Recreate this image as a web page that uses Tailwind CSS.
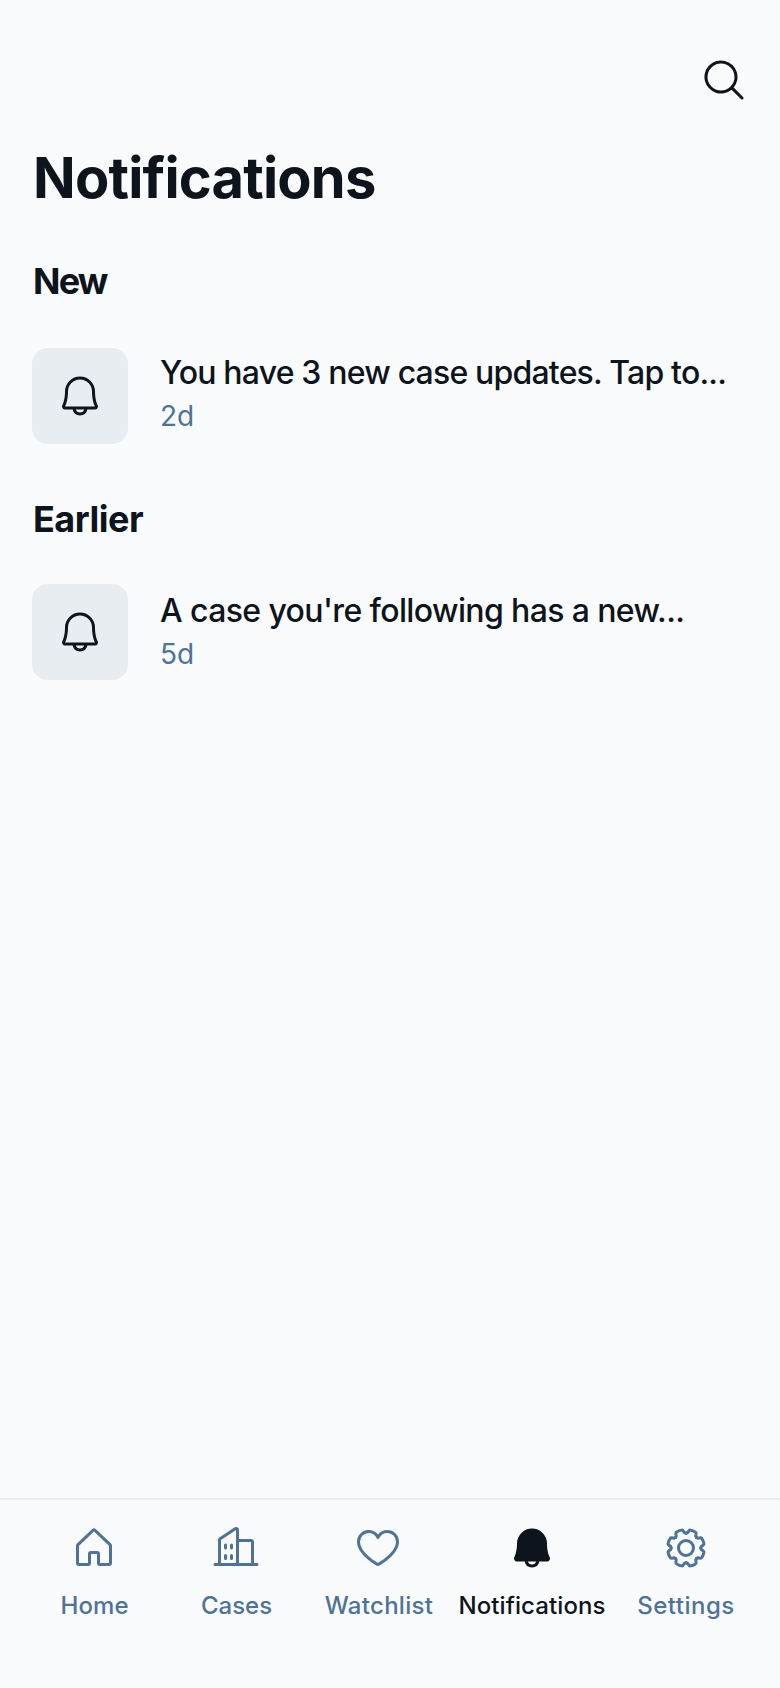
<!DOCTYPE html>
<html lang="en">
<head>
<meta charset="utf-8">
<title>Notifications</title>
<script src="https://cdn.jsdelivr.net/npm/@tailwindcss/browser@4"></script>
</head>
<body class="bg-[#f9fbfd] text-[#0e141b] font-['Inter',sans-serif]">
<svg class="hidden">
  <symbol id="bell" viewBox="0 0 256 256"><path d="M221.8,175.94C216.25,166.38,208,139.33,208,104a80,80,0,1,0-160,0c0,35.34-8.26,62.38-13.81,71.94A16,16,0,0,0,48,200H88.81a40,40,0,0,0,78.38,0H208a16,16,0,0,0,13.8-24.06ZM128,216a24,24,0,0,1-22.62-16h45.24A24,24,0,0,1,128,216ZM48,184c7.7-13.24,16-43.92,16-80a64,64,0,1,1,128,0c0,36.05,8.28,66.73,16,80Z"/></symbol>
  <symbol id="tooth" viewBox="-128 -128 256 256" overflow="visible"><path d="M-30.2,-73L-24,-78L-20.5,-92Q-19,-96.5 -14,-97.5Q0,-100.5 14,-97.5Q19,-96.5 20.5,-92L24,-78L30.2,-73"/></symbol>
</svg>
<div class="flex h-[1688px] w-[780px] flex-col">
  <header class="px-8 pt-14">
    <div class="flex justify-end">
      <svg class="size-12 fill-current" viewBox="0 0 256 256"><path d="M229.66,218.34l-50.07-50.06a88.11,88.11,0,1,0-11.31,11.31l50.06,50.07a8,8,0,0,0,11.32-11.32ZM40,112a72,72,0,1,1,72,72A72.08,72.08,0,0,1,40,112Z"/></svg>
    </div>
    <h1 class="mt-[39px] pl-px text-[56px] leading-[70px] font-bold tracking-[-0.8px]">Notifications</h1>
  </header>
  <main class="flex-1 px-8">
    <h2 class="mt-[46px] pl-px text-[36px] leading-[45px] font-bold tracking-[-1.8px]">New</h2>
    <div class="mt-[44px] flex h-24 gap-8">
      <div class="flex size-24 shrink-0 items-center justify-center rounded-2xl bg-[#e8edf2]"><svg class="size-12 fill-current"><use href="#bell"/></svg></div>
      <div class="pt-px whitespace-nowrap">
        <p class="text-[32px] leading-[48px] font-medium tracking-[-0.81px]">You have 3 new case updates. Tap to...</p>
        <p class="text-[28px] leading-[38px] text-[#4e7397]">2d</p>
      </div>
    </div>
    <h2 class="mt-[53px] pl-px text-[36px] leading-[45px] font-bold tracking-[-0.5px]">Earlier</h2>
    <div class="mt-[42px] flex h-24 gap-8">
      <div class="flex size-24 shrink-0 items-center justify-center rounded-2xl bg-[#e8edf2]"><svg class="size-12 fill-current"><use href="#bell"/></svg></div>
      <div class="pt-[3px] whitespace-nowrap">
        <p class="text-[32px] leading-[48px] font-medium tracking-[-0.62px]">A case you're following has a new...</p>
        <p class="text-[28px] leading-[38px] text-[#4e7397]">5d</p>
      </div>
    </div>
  </main>
  <nav class="grid h-[190px] grid-cols-[142px_142px_142px_166px_142px] border-t-2 border-[#e8edf2] pt-6 pl-[23px] text-[24px] leading-9 font-medium text-[#4e7397]">
    <div class="flex flex-col items-center gap-4 whitespace-nowrap">
      <svg class="size-12 shrink-0 fill-current" viewBox="0 0 256 256"><path d="M218.83,103.77l-80-75.48a1.14,1.14,0,0,1-.11-.11,16,16,0,0,0-21.53,0l-.11.11L37.17,103.77A16,16,0,0,0,32,115.55V208a16,16,0,0,0,16,16H96a16,16,0,0,0,16-16V160h32v48a16,16,0,0,0,16,16h48a16,16,0,0,0,16-16V115.55A16,16,0,0,0,218.83,103.77ZM208,208H160V160a16,16,0,0,0-16-16H112a16,16,0,0,0-16,16v48H48V115.55l.11-.1L128,40l79.9,75.43.11.1Z"/></svg>
      <span class="pl-px tracking-[0.1px]">Home</span>
    </div>
    <div class="flex flex-col items-center gap-4 whitespace-nowrap">
      <svg class="size-12 shrink-0 fill-current" viewBox="0 0 256 256"><path d="M240,208H224V96a16,16,0,0,0-16-16H144V32a16,16,0,0,0-24.88-13.32L39.12,72A16,16,0,0,0,32,85.34V208H16a8,8,0,0,0,0,16H240a8,8,0,0,0,0-16ZM208,96V208H144V96ZM48,85.34,128,32V208H48ZM112,112v16a8,8,0,0,1-16,0V112a8,8,0,1,1,16,0Zm-32,0v16a8,8,0,0,1-16,0V112a8,8,0,1,1,16,0Zm0,56v16a8,8,0,0,1-16,0V168a8,8,0,0,1,16,0Zm32,0v16a8,8,0,0,1-16,0V168a8,8,0,0,1,16,0Z"/></svg>
      <span class="pl-px">Cases</span>
    </div>
    <div class="flex flex-col items-center gap-4 whitespace-nowrap">
      <svg class="size-12 shrink-0 fill-current" viewBox="0 0 256 256"><path d="M178,32c-20.65,0-38.73,8.88-50,23.89C116.73,40.88,98.65,32,78,32A62.07,62.07,0,0,0,16,94c0,70,103.79,126.66,108.21,129a8,8,0,0,0,7.58,0C136.21,220.66,240,164,240,94A62.07,62.07,0,0,0,178,32ZM128,206.8C109.74,196.16,32,147.69,32,94A46.06,46.06,0,0,1,78,48c19.45,0,35.78,10.36,42.6,27a8,8,0,0,0,14.8,0c6.82-16.67,23.15-27,42.6-27a46.06,46.06,0,0,1,46,46C224,147.61,146.24,196.15,128,206.8Z"/></svg>
      <span class="pl-[2px] tracking-[0.3px]">Watchlist</span>
    </div>
    <div class="flex flex-col items-center gap-4 whitespace-nowrap text-[#0e141b]">
      <svg class="size-12 shrink-0 fill-current" viewBox="0 0 256 256"><path d="M221.8,175.94C216.25,166.38,208,139.33,208,104a80,80,0,1,0-160,0c0,35.34-8.26,62.38-13.81,71.94A16,16,0,0,0,48,200H88.81a40,40,0,0,0,78.38,0H208a16,16,0,0,0,13.8-24.06ZM128,216a24,24,0,0,1-22.62-16h45.24A24,24,0,0,1,128,216Z"/></svg>
      <span class="tracking-[0.1px]">Notifications</span>
    </div>
    <div class="flex flex-col items-center gap-4 whitespace-nowrap">
      <svg class="size-12 shrink-0 fill-none stroke-current" stroke-width="16" stroke-linejoin="round" stroke-linecap="round" viewBox="-128 -128 256 256">
        <circle r="40"/>
        <g transform="rotate(22.5)">
          <use href="#tooth" x="-128" y="-128" width="256" height="256"/>
          <use href="#tooth" x="-128" y="-128" width="256" height="256" transform="rotate(45)"/>
          <use href="#tooth" x="-128" y="-128" width="256" height="256" transform="rotate(90)"/>
          <use href="#tooth" x="-128" y="-128" width="256" height="256" transform="rotate(135)"/>
          <use href="#tooth" x="-128" y="-128" width="256" height="256" transform="rotate(180)"/>
          <use href="#tooth" x="-128" y="-128" width="256" height="256" transform="rotate(225)"/>
          <use href="#tooth" x="-128" y="-128" width="256" height="256" transform="rotate(270)"/>
          <use href="#tooth" x="-128" y="-128" width="256" height="256" transform="rotate(315)"/>
        </g>
      </svg>
      <span class="tracking-[0.5px]">Settings</span>
    </div>
  </nav>
</div>
</body>
</html>
